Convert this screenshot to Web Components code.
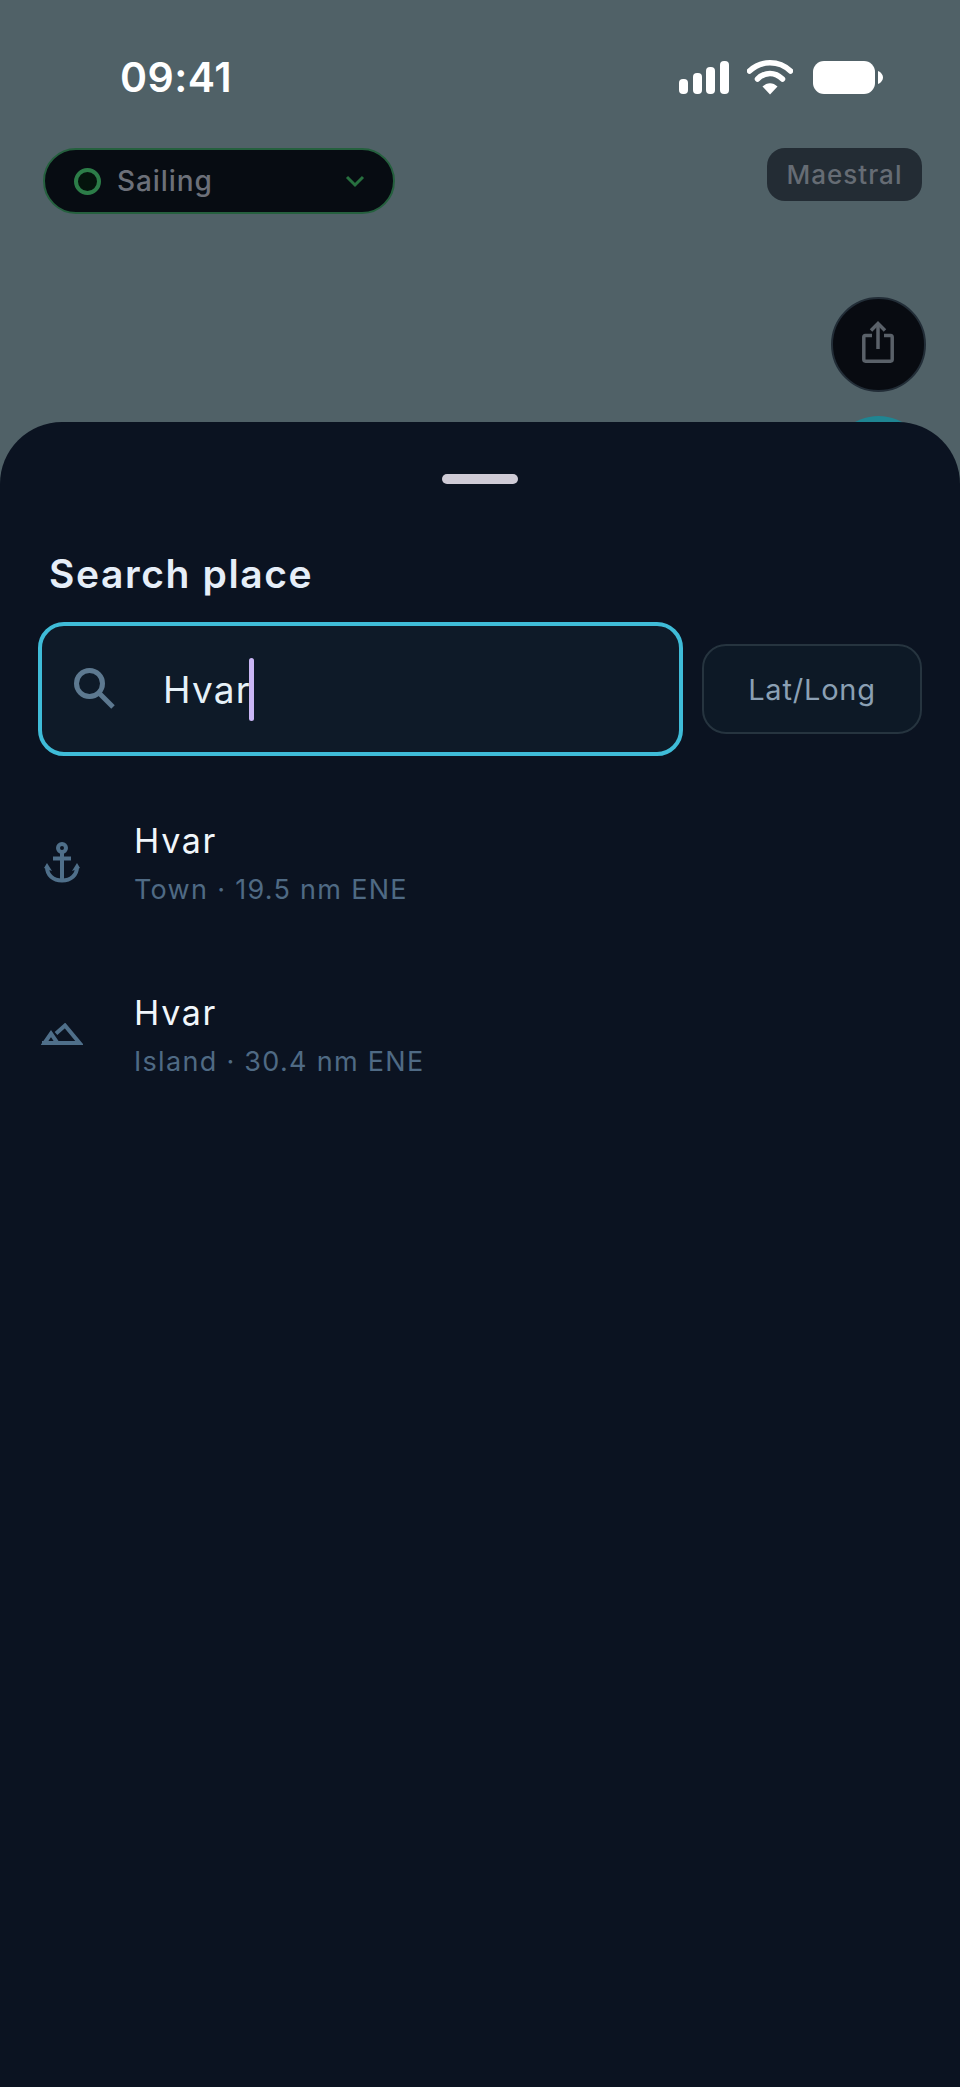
<!DOCTYPE html>
<html>
<head>
<meta charset="utf-8">
<style>
  html, body { margin: 0; padding: 0; background: #0b1321; }
  body { font-family: Inter, "Noto Sans", sans-serif; width: 960px; height: 2087px; overflow: hidden; }
</style>
</head>
<body>
<map-screen></map-screen>

<script>
  class StatusBar extends HTMLElement {
    constructor() {
      super();
      this.attachShadow({ mode: 'open' });
      this.shadowRoot.innerHTML = `
        <style>
          :host { display: flex; justify-content: space-between; align-items: center; height: 39px; padding: 58px 77px 0 120px; color: #fff; }
          .time { font-size: 41px; font-weight: 600; line-height: 39px; letter-spacing: 0.5px; }
          .icons { display: flex; align-items: center; }
          .wifi { margin: 0 20px 0 18px; }
          svg { display: block; fill: #fff; }
        </style>
        <span class="time">09:41</span>
        <div class="icons">
          <svg width="50" height="34" viewBox="0 0 50 34">
            <rect x="0" y="18" width="9" height="15" rx="4"/>
            <rect x="14" y="12" width="9" height="21" rx="4"/>
            <rect x="27" y="6" width="9" height="27" rx="4"/>
            <rect x="41" y="0" width="9" height="33" rx="4"/>
          </svg>
          <svg class="wifi" width="46" height="35" viewBox="0 0 46 35">
            <path d="M2.5 11 C14 0 32 0 43.5 11" fill="none" stroke="#fff" stroke-width="5.5" stroke-linecap="round"/>
            <path d="M10.5 19 C18 11.5 28 11.5 35.5 19" fill="none" stroke="#fff" stroke-width="5.5" stroke-linecap="round"/>
            <path d="M15.5 26.5 C20 22 26 22 30.5 26.5 L23 34.5 Z"/>
          </svg>
          <svg width="70" height="34" viewBox="0 0 70 34">
            <rect x="0" y="0" width="62" height="33" rx="11"/>
            <path d="M65 10 C68 11 70 14 70 16.5 C70 19 68 22 65 23 Z"/>
          </svg>
        </div>
      `;
    }
  }

  class ModeSelect extends HTMLElement {
    constructor() {
      super();
      this.attachShadow({ mode: 'open' });
      this.shadowRoot.innerHTML = `
        <style>
          :host { display: flex; align-items: center; box-sizing: border-box; width: 352px; height: 66px; padding: 0 28px 0 29px; background: #070c12; border: 2px solid #25603e; border-radius: 33px; color: #6c7079; font-size: 28px; font-weight: 500; letter-spacing: 0.9px; }
          .dot { box-sizing: border-box; width: 27px; height: 27px; border: 4px solid #2c7d48; border-radius: 50%; background: #04140c; margin-right: 16px; }
          span { flex: 1; }
          svg { display: block; }
        </style>
        <div class="dot"></div>
        <span><slot></slot></span>
        <svg width="20" height="14" viewBox="0 0 20 14"><path d="M2 3 L10 11 L18 3" fill="none" stroke="#27703f" stroke-width="3"/></svg>
      `;
    }
  }

  class WindTag extends HTMLElement {
    constructor() {
      super();
      this.attachShadow({ mode: 'open' });
      this.shadowRoot.innerHTML = `
        <style>
          :host { display: flex; align-items: center; justify-content: center; box-sizing: border-box; width: 155px; height: 53px; background: #232c34; border-radius: 18px; color: #666c74; font-size: 26px; font-weight: 500; letter-spacing: 1px; }
        </style>
        <slot></slot>
      `;
    }
  }

  class RoundButton extends HTMLElement {
    constructor() {
      super();
      this.attachShadow({ mode: 'open' });
      this.shadowRoot.innerHTML = `
        <style>
          :host { display: flex; align-items: center; justify-content: center; box-sizing: border-box; width: 95px; height: 95px; border-radius: 50%; background: #080b11; border: 2px solid #222d37; }
          svg { display: block; margin: -6px 0 0 -1px; }
        </style>
        <svg width="32" height="42" viewBox="0 0 32 42" fill="none" stroke="#5a6169" stroke-width="3.5">
          <path d="M10 14.5 H3.5 A1.8 1.8 0 0 0 1.8 16.3 V38.5 A1.8 1.8 0 0 0 3.5 40.2 H28.5 A1.8 1.8 0 0 0 30.2 38.5 V16.3 A1.8 1.8 0 0 0 28.5 14.5 H22"/>
          <path d="M16 28 V3"/>
          <path d="M9 9.5 L16 2.5 L23 9.5"/>
        </svg>
      `;
    }
  }

  class SearchField extends HTMLElement {
    constructor() {
      super();
      this.attachShadow({ mode: 'open' });
      this.shadowRoot.innerHTML = `
        <style>
          :host { display: flex; align-items: center; box-sizing: border-box; width: 645px; height: 134px; padding: 0 0 0 32px; background: #0e1a28; border: 4px solid #3fbcd8; border-radius: 26px; color: #e6f1f8; font-size: 37px; letter-spacing: 1.2px; }
          svg { display: block; margin-right: 47px; }
          .caret { width: 5px; height: 63px; border-radius: 3px; background: #c9b6f5; margin-left: -2px; }
        </style>
        <svg width="42" height="42" viewBox="0 0 42 42" fill="none" stroke="#5d7990" stroke-width="5">
          <circle cx="15.5" cy="15.5" r="13"/>
          <path d="M25 25 L39 39"/>
        </svg>
        <slot></slot>
        <div class="caret"></div>
      `;
    }
  }

  class OutlineButton extends HTMLElement {
    constructor() {
      super();
      this.attachShadow({ mode: 'open' });
      this.shadowRoot.innerHTML = `
        <style>
          :host { display: flex; align-items: center; justify-content: center; box-sizing: border-box; width: 220px; height: 90px; background: #0d1926; border: 2.5px solid #26343f; border-radius: 24px; color: #8ba0b4; font-size: 29px; letter-spacing: 0.8px; }
        </style>
        <slot></slot>
      `;
    }
  }

  class PlaceRow extends HTMLElement {
    constructor() {
      super();
      this.attachShadow({ mode: 'open' });
      const icons = {
        anchor: `<svg width="38" height="41" viewBox="0 0 38 41" fill="none" stroke="#4f6f8a" stroke-width="4">
            <circle cx="19" cy="6" r="4"/>
            <path d="M19 10 V38"/>
            <path d="M10 16.5 H28"/>
            <path d="M4 25 C4 33 10 38.5 19 38.5 C28 38.5 34 33 34 25"/>
            <path d="M1 26 L4 21 L9 29 Z M37 26 L34 21 L29 29 Z" fill="#4f6f8a" stroke="none"/>
          </svg>`,
        mountain: `<svg width="42" height="22" viewBox="0 0 42 22" fill="none" stroke="#4f6f8a" stroke-width="4">
            <path d="M3.5 20 L10 10.5 L16.5 20 Z"/>
            <path d="M15 10.5 L24 2.5 L38.5 20 H1"/>
          </svg>`
      };
      this.shadowRoot.innerHTML = `
        <style>
          :host { display: flex; align-items: center; height: 172px; }
          .icon { display: flex; justify-content: center; width: 44px; margin: -2px 50px 0 0; }
          svg { display: block; }
          .name { color: #f1f6fb; font-size: 34px; line-height: 42px; letter-spacing: 1.7px; }
          .sub { color: #4f6a84; font-size: 27px; line-height: 34px; margin-top: 11px; letter-spacing: 1.3px; }
        </style>
        <div class="icon">${icons[this.getAttribute('icon')]}</div>
        <div>
          <div class="name">${this.getAttribute('name')}</div>
          <div class="sub">${this.getAttribute('sub')}</div>
        </div>
      `;
    }
  }

  class SearchSheet extends HTMLElement {
    constructor() {
      super();
      this.attachShadow({ mode: 'open' });
      this.shadowRoot.innerHTML = `
        <style>
          :host { display: block; position: relative; box-sizing: border-box; height: 1665px; padding-top: 52px; background: #0b1321; border-radius: 62px 62px 0 0; }
          .handle { width: 76px; height: 10px; margin: 0 auto 66px; border-radius: 5px; background: #cfcbd6; }
          h2 { margin: 0 0 24px 49px; color: #e6eef8; font-size: 39px; line-height: 48px; font-weight: 600; letter-spacing: 1.6px; }
          .search { display: flex; align-items: center; gap: 19px; padding: 0 38px; }
          .list { padding: 21px 0 0 40px; }
        </style>
        <div class="handle"></div>
        <h2>Search place</h2>
        <div class="search">
          <search-field>Hvar</search-field>
          <outline-button>Lat/Long</outline-button>
        </div>
        <div class="list">
          <place-row icon="anchor" name="Hvar" sub="Town · 19.5 nm ENE"></place-row>
          <place-row icon="mountain" name="Hvar" sub="Island · 30.4 nm ENE"></place-row>
        </div>
      `;
    }
  }

  class MapScreen extends HTMLElement {
    constructor() {
      super();
      this.attachShadow({ mode: 'open' });
      this.shadowRoot.innerHTML = `
        <style>
          :host { display: block; position: relative; height: 2087px; background: #506167; overflow: hidden; }
          .top { height: 422px; box-sizing: border-box; }
          .controls { display: flex; justify-content: space-between; align-items: flex-start; padding: 51px 38px 0 43px; }
          .side { display: flex; justify-content: flex-end; padding: 83px 34px 0 0; }
          .peek { position: absolute; top: 416px; left: 831px; width: 95px; height: 95px; border-radius: 50%; background: #1f8592; }
          search-sheet { position: relative; }
        </style>
        <div class="peek"></div>
        <div class="top">
          <status-bar></status-bar>
          <div class="controls">
            <mode-select>Sailing</mode-select>
            <wind-tag>Maestral</wind-tag>
          </div>
          <div class="side"><round-button></round-button></div>
        </div>
        <search-sheet></search-sheet>
      `;
    }
  }

  customElements.define('status-bar', StatusBar);
  customElements.define('mode-select', ModeSelect);
  customElements.define('wind-tag', WindTag);
  customElements.define('round-button', RoundButton);
  customElements.define('search-field', SearchField);
  customElements.define('outline-button', OutlineButton);
  customElements.define('place-row', PlaceRow);
  customElements.define('search-sheet', SearchSheet);
  customElements.define('map-screen', MapScreen);
</script>
</body>
</html>
